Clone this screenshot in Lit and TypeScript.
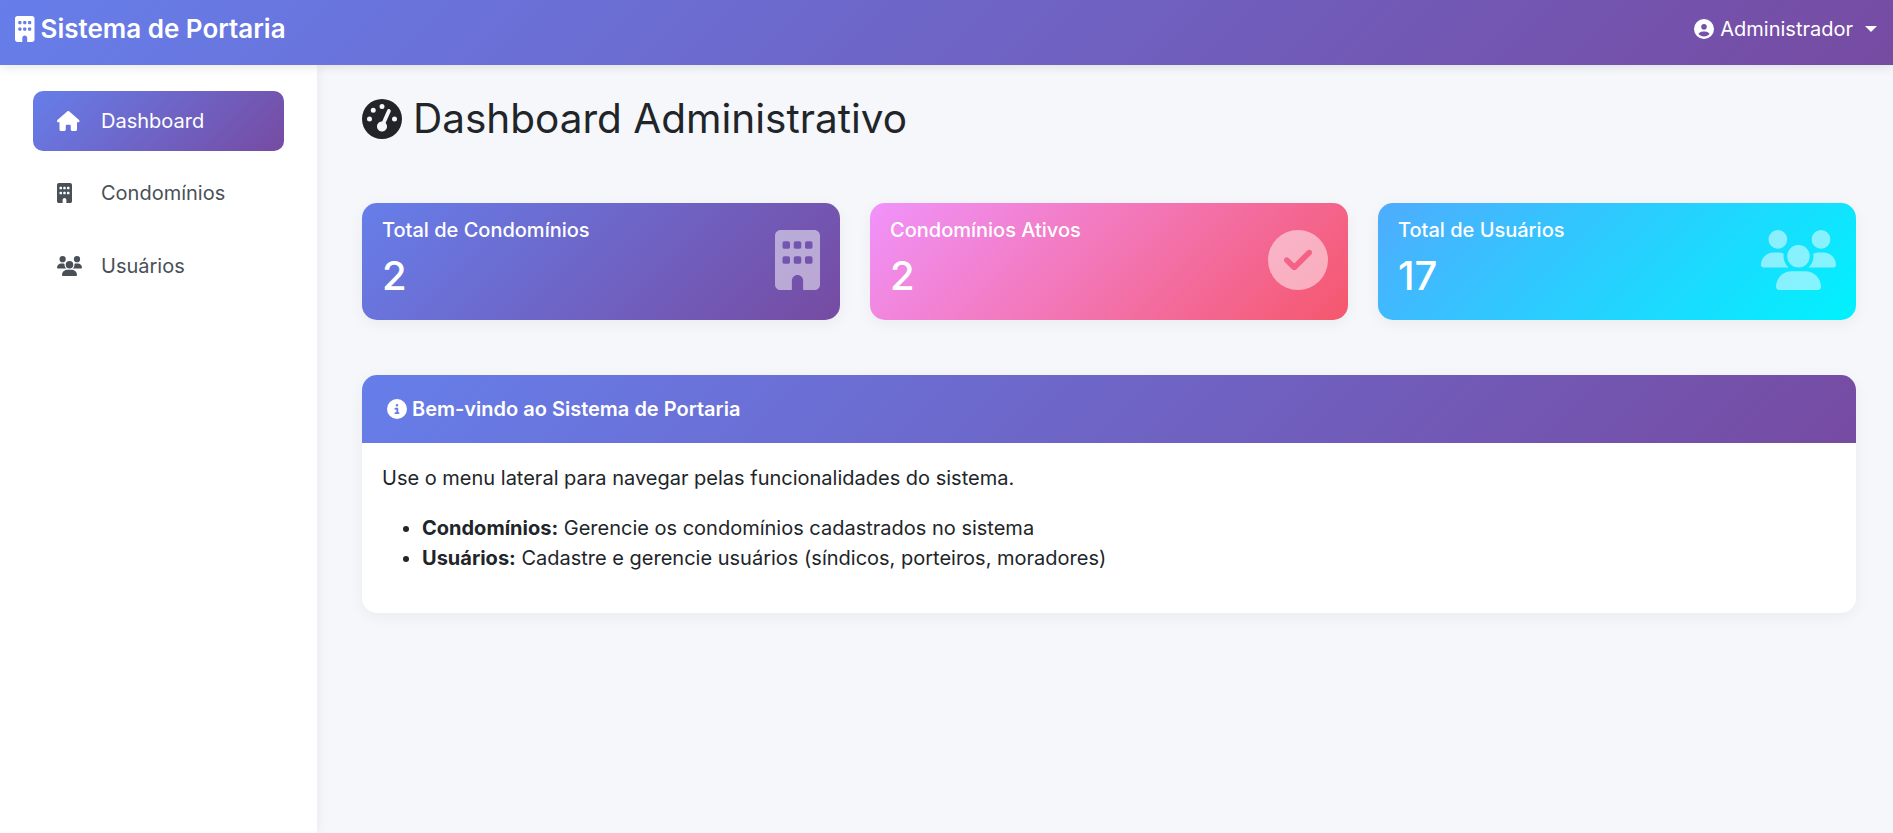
import { LitElement, html, css, svg } from 'lit';
import { customElement } from 'lit/decorators.js';

const icons = {
  building: ['0 0 384 512', 'M48 0C21.5 0 0 21.5 0 48V464c0 26.5 21.5 48 48 48h96V432c0-26.5 21.5-48 48-48s48 21.5 48 48v80h96c26.5 0 48-21.5 48-48V48c0-26.5-21.5-48-48-48H48zM64 240c0-8.8 7.2-16 16-16h32c8.8 0 16 7.2 16 16v32c0 8.8-7.2 16-16 16H80c-8.8 0-16-7.2-16-16V240zm112-16h32c8.8 0 16 7.2 16 16v32c0 8.8-7.2 16-16 16H176c-8.8 0-16-7.2-16-16V240c0-8.8 7.2-16 16-16zm80 16c0-8.8 7.2-16 16-16h32c8.8 0 16 7.2 16 16v32c0 8.8-7.2 16-16 16H272c-8.8 0-16-7.2-16-16V240zM80 96h32c8.8 0 16 7.2 16 16v32c0 8.8-7.2 16-16 16H80c-8.8 0-16-7.2-16-16V112c0-8.8 7.2-16 16-16zm80 16c0-8.8 7.2-16 16-16h32c8.8 0 16 7.2 16 16v32c0 8.8-7.2 16-16 16H176c-8.8 0-16-7.2-16-16V112zM272 96h32c8.8 0 16 7.2 16 16v32c0 8.8-7.2 16-16 16H272c-8.8 0-16-7.2-16-16V112c0-8.8 7.2-16 16-16z'],
  house: ['0 0 576 512', 'M575.8 255.5c0 18-15 32.1-32 32.1h-32l.7 160.2c0 2.7-.2 5.4-.5 8.1V472c0 22.1-17.9 40-40 40H456c-1.1 0-2.2 0-3.3-.1c-1.4 .1-2.8 .1-4.2 .1H416 392c-22.1 0-40-17.9-40-40V448 384c0-17.7-14.3-32-32-32H256c-17.7 0-32 14.3-32 32v64 24c0 22.1-17.9 40-40 40H160 128.1c-1.5 0-3-.1-4.5-.2c-1.2 .1-2.4 .2-3.6 .2H104c-22.1 0-40-17.9-40-40V360c0-.9 0-1.9 .1-2.8V287.6H32c-18 0-32-14-32-32.1c0-9 3-17 10-24L266.4 8c7-7 15-8 22-8s15 2 21 7L564.8 231.5c8 7 12 15 11 24z'],
  users: ['0 0 640 512', 'M144 0a80 80 0 1 1 0 160A80 80 0 1 1 144 0zM512 0a80 80 0 1 1 0 160A80 80 0 1 1 512 0zM0 298.7C0 239.8 47.8 192 106.7 192h42.7c15.9 0 31 3.5 44.6 9.7c-1.3 7.2-1.9 14.7-1.9 22.3c0 38.2 16.8 72.5 43.3 96c-.2 0-.4 0-.7 0H21.3C9.6 320 0 310.4 0 298.7zM405.3 320c-.2 0-.4 0-.7 0c26.6-23.5 43.3-57.8 43.3-96c0-7.6-.7-15-1.9-22.3c13.6-6.3 28.7-9.7 44.6-9.7h42.7C592.2 192 640 239.8 640 298.7c0 11.8-9.6 21.3-21.3 21.3H405.3zM224 224a96 96 0 1 1 192 0 96 96 0 1 1 -192 0zM128 485.3C128 411.7 187.7 352 261.3 352H378.7C452.3 352 512 411.7 512 485.3c0 14.7-11.9 26.7-26.7 26.7H154.7c-14.7 0-26.7-11.9-26.7-26.7z'],
  check: ['0 0 512 512', 'M256 512A256 256 0 1 0 256 0a256 256 0 1 0 0 512zM369 209L241 337c-9.4 9.4-24.6 9.4-33.9 0l-64-64c-9.4-9.4-9.4-24.6 0-33.9s24.6-9.4 33.9 0l47 47L335 175c9.4-9.4 24.6-9.4 33.9 0s9.4 24.6 0 33.9z'],
  user: ['0 0 512 512', 'M399 384.2C376.9 345.8 335.4 320 288 320H224c-47.4 0-88.9 25.8-111 64.2c35.2 39.2 86.2 63.8 143 63.8s107.8-24.7 143-63.8zM0 256a256 256 0 1 1 512 0A256 256 0 1 1 0 256zm256 16a72 72 0 1 0 0-144 72 72 0 1 0 0 144z'],
  info: ['0 0 512 512', 'M256 512A256 256 0 1 0 256 0a256 256 0 1 0 0 512zM216 336h24V272H216c-13.3 0-24-10.7-24-24s10.7-24 24-24h48c13.3 0 24 10.7 24 24v88h8c13.3 0 24 10.7 24 24s-10.7 24-24 24H216c-13.3 0-24-10.7-24-24s10.7-24 24-24zm40-208a32 32 0 1 1 0 64 32 32 0 1 1 0-64z'],
  gauge: ['0 0 512 512', 'M0 256a256 256 0 1 1 512 0A256 256 0 1 1 0 256zM288 96a32 32 0 1 0 -64 0 32 32 0 1 0 64 0zM256 416c35.3 0 64-28.7 64-64c0-17.4-6.9-33.1-18.1-44.6L366 161.7c5.3-12.1-.2-26.3-12.3-31.6s-26.3 .2-31.6 12.3L257.9 288c-.6 0-1.3 0-1.9 0c-35.3 0-64 28.7-64 64s28.7 64 64 64zM176 144a32 32 0 1 0 -64 0 32 32 0 1 0 64 0zM96 288a32 32 0 1 0 0-64 32 32 0 1 0 0 64zm352-32a32 32 0 1 0 -64 0 32 32 0 1 0 64 0z'],
};

type IconName = keyof typeof icons;

const icon = (name: IconName, cls = '') => {
  const [box, d] = icons[name];
  return html`<svg class="icon ${cls}" viewBox=${box} aria-hidden="true">${svg`<path fill="currentColor" d=${d}></path>`}</svg>`;
};

@customElement('app-root')
export class AppRoot extends LitElement {
  static styles = css`
    * {
      box-sizing: border-box;
    }
    :host {
      display: block;
      height: 833px;
      overflow: hidden;
      background: #f5f7fa;
      color: #212529;
      font-family: Inter, 'Liberation Sans', sans-serif;
      font-size: 20px;
    }
    .icon {
      display: block;
      flex: none;
      height: 1em;
    }
    .topbar {
      position: relative;
      z-index: 2;
      height: 65px;
      display: flex;
      align-items: center;
      justify-content: space-between;
      padding: 0 16px 7px 15px;
      color: #fff;
      background: linear-gradient(135deg, #667eea 0%, #764ba2 100%);
      box-shadow: 0 2px 10px rgba(0, 0, 0, 0.1);
    }
    .brand {
      display: flex;
      align-items: center;
      gap: 6px;
      font-size: 26px;
      font-weight: 600;
      line-height: 32px;
    }
    .brand .icon {
      height: 26px;
    }
    .account {
      display: flex;
      align-items: center;
      line-height: 30px;
    }
    .account .icon {
      height: 20px;
      margin-right: 6px;
    }
    .caret {
      width: 0;
      height: 0;
      margin-left: 12px;
      border-top: 6px solid #fff;
      border-left: 6px solid transparent;
      border-right: 6px solid transparent;
    }
    .layout {
      display: flex;
      height: 768px;
    }
    .sidebar {
      flex: none;
      width: 317px;
      display: flex;
      flex-direction: column;
      gap: 12.4px;
      padding: 26px 33px 0;
      background: #fff;
      box-shadow: 2px 0 10px rgba(0, 0, 0, 0.05);
    }
    .nav-link {
      display: flex;
      align-items: center;
      height: 60px;
      padding-left: 24px;
      border-radius: 10px;
      color: #495057;
    }
    .nav-link.active {
      color: #fff;
      background: linear-gradient(135deg, #667eea 0%, #764ba2 100%);
    }
    .nav-icon {
      flex: none;
      width: 44px;
    }
    .nav-icon .icon {
      height: 20px;
    }
    .main {
      flex: 1;
      min-width: 0;
      padding: 30px 37px 0 45px;
    }
    h1 {
      display: flex;
      align-items: center;
      gap: 11px;
      margin: 0;
      height: 48px;
      font-size: 40.5px;
      font-weight: 400;
      line-height: 48px;
    }
    h1 .icon {
      height: 40px;
    }
    .stats {
      display: grid;
      grid-template-columns: repeat(3, 1fr);
      gap: 30px;
      margin-top: 60px;
    }
    .stat {
      height: 117px;
      display: flex;
      align-items: center;
      justify-content: space-between;
      padding: 0 20px 6px;
      border-radius: 15px;
      color: #fff;
      box-shadow: 0 4px 15px rgba(0, 0, 0, 0.05);
    }
    .stat.purple {
      background: linear-gradient(135deg, #667eea 0%, #764ba2 100%);
    }
    .stat.pink {
      background: linear-gradient(135deg, #f093fb 0%, #f5576c 100%);
    }
    .stat.blue {
      background: linear-gradient(135deg, #4facfe 0%, #00f2fe 100%);
    }
    .stat-label {
      font-weight: 500;
      line-height: 24px;
    }
    .stat-value {
      margin-top: 10px;
      font-size: 40px;
      font-weight: 500;
      line-height: 48px;
    }
    .stat .icon {
      height: 60px;
      margin-top: 3px;
      opacity: 0.5;
    }
    .card {
      margin-top: 55px;
      height: 238px;
      border-radius: 15px;
      overflow: hidden;
      background: #fff;
      box-shadow: 0 4px 15px rgba(0, 0, 0, 0.05);
    }
    .card-head {
      height: 68px;
      display: flex;
      align-items: center;
      gap: 5px;
      padding: 0 20px 0 25px;
      color: #fff;
      font-weight: 600;
      background: linear-gradient(135deg, #667eea 0%, #764ba2 100%);
    }
    .card-head .icon {
      height: 20px;
    }
    .card-body {
      padding: 20px;
      line-height: 30px;
    }
    p {
      margin: 0 0 20px;
    }
    ul {
      margin: 0;
      padding-left: 40px;
    }
    b {
      font-weight: 700;
    }
  `;

  render() {
    return html`
      <header class="topbar">
        <div class="brand">${icon('building')}<span>Sistema de Portaria</span></div>
        <div class="account">${icon('user')}<span>Administrador</span><i class="caret"></i></div>
      </header>
      <div class="layout">
        <nav class="sidebar">
          <div class="nav-link active"><span class="nav-icon">${icon('house')}</span>Dashboard</div>
          <div class="nav-link"><span class="nav-icon">${icon('building')}</span>Condomínios</div>
          <div class="nav-link"><span class="nav-icon">${icon('users')}</span>Usuários</div>
        </nav>
        <main class="main">
          <h1>${icon('gauge')}<span>Dashboard Administrativo</span></h1>
          <section class="stats">
            <div class="stat purple">
              <div><div class="stat-label">Total de Condomínios</div><div class="stat-value">2</div></div>
              ${icon('building')}
            </div>
            <div class="stat pink">
              <div><div class="stat-label">Condomínios Ativos</div><div class="stat-value">2</div></div>
              ${icon('check')}
            </div>
            <div class="stat blue">
              <div><div class="stat-label">Total de Usuários</div><div class="stat-value">17</div></div>
              ${icon('users')}
            </div>
          </section>
          <section class="card">
            <div class="card-head">${icon('info')}<span>Bem-vindo ao Sistema de Portaria</span></div>
            <div class="card-body">
              <p>Use o menu lateral para navegar pelas funcionalidades do sistema.</p>
              <ul>
                <li><b>Condomínios:</b> Gerencie os condomínios cadastrados no sistema</li>
                <li><b>Usuários:</b> Cadastre e gerencie usuários (síndicos, porteiros, moradores)</li>
              </ul>
            </div>
          </section>
        </main>
      </div>
    `;
  }
}
